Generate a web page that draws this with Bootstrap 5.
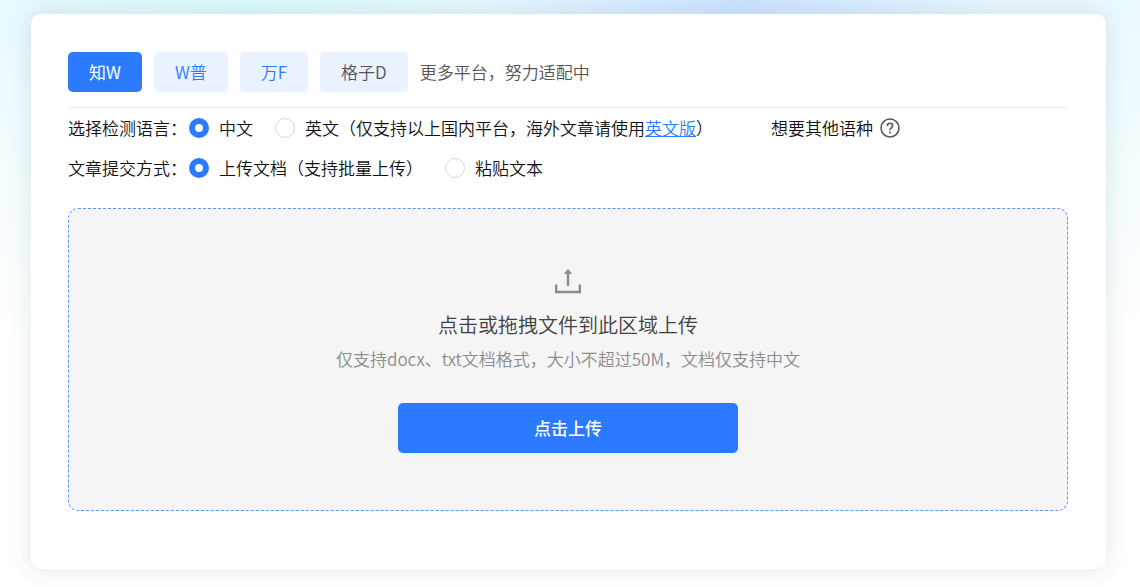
<!DOCTYPE html>
<html lang="zh-CN">
<head>
<meta charset="utf-8">
<meta name="viewport" content="width=device-width, initial-scale=1">
<title>文章检测</title>
<link href="https://cdn.jsdelivr.net/npm/bootstrap@5.3.0/dist/css/bootstrap.min.css" rel="stylesheet">
<style>
  :root { --brand: #2c7aff; --brand-soft: #eaf1ff; }
  body {
    font-family: "Noto Sans CJK SC", sans-serif;
    font-size: 17px;
    font-weight: 350;
    line-height: 24px;
    color: #111;
    min-height: 100vh;
    background:
      radial-gradient(ellipse 260px 120px at 65% 0, #cde3ff 0, #cde3ff00 100%),
      radial-gradient(ellipse 300px 150px at 22% 0, #dcfafb 0, #dcfafb00 100%),
      linear-gradient(#eaf8ff 0, #f2fcff 140px, #fff 340px) no-repeat #fff;
  }
  .page { padding: 14px 34px 17px 31px; }
  .panel {
    background: #fff;
    border-radius: 10px;
    box-shadow: 0 0 24px rgba(0, 70, 80, .13);
    padding: 38px 38px 58px 37px;
  }
  .platforms { padding-bottom: 15px; border-bottom: 1px solid #ebebeb; color: #555; gap: 12px; }
  .platform {
    height: 40px;
    padding: 0 21px;
    border: 0;
    border-radius: 5px;
    font-size: 17px;
    font-weight: 350;
    color: var(--brand);
    background: var(--brand-soft);
  }
  .platform.active { color: #fff; background: var(--brand); font-weight: 400; }
  .platform.muted { color: #555; }
  .option-row { height: 40px; }
  .option-title { width: 121px; }
  .choice { gap: 10px; margin-right: 22px; }
  .choice .form-check-input {
    width: 20px;
    height: 20px;
    margin: 0;
    border: 1px solid #d9d9d9;
  }
  .choice .form-check-input:checked {
    border: 6px solid var(--brand);
    background: #fff;
  }
  .choice a { color: var(--brand); }
  .other { margin-left: 36px; gap: 7px; }
  .drop {
    height: 303px;
    margin-top: 20px;
    padding-top: 60px;
    border: 1px dashed #5894f5;
    border-radius: 10px;
    background: #f5f5f5;
  }
  .drop-title { font-size: 20px; line-height: 28px; color: #404040; margin-top: 16px; }
  .drop-hint { color: #8c8c8c; margin-top: 8px; }
  .upload {
    width: 340px;
    height: 50px;
    margin-top: 32px;
    border: 0;
    border-radius: 5px;
    background: var(--brand);
    color: #fff;
    font-size: 17px;
    font-weight: 500;
  }
</style>
</head>
<body>
<main class="page">
  <section class="panel">
    <div class="platforms d-flex flex-wrap align-items-center">
      <button type="button" class="btn platform active">知W</button>
      <button type="button" class="btn platform">W普</button>
      <button type="button" class="btn platform">万F</button>
      <button type="button" class="btn platform muted">格子D</button>
      <span>更多平台，努力适配中</span>
    </div>

    <div class="option-row d-flex align-items-center text-nowrap" role="radiogroup" aria-labelledby="lang-title">
      <span class="option-title" id="lang-title">选择检测语言：</span>
      <div class="choice d-flex align-items-center">
        <input class="form-check-input" type="radio" name="lang" id="lang-zh" checked>
        <label for="lang-zh">中文</label>
      </div>
      <div class="choice d-flex align-items-center">
        <input class="form-check-input" type="radio" name="lang" id="lang-en">
        <label for="lang-en">英文（仅支持以上国内平台，海外文章请使用<a href="#">英文版</a>）</label>
      </div>
      <div class="other d-flex align-items-center">
        <span>想要其他语种</span>
        <svg width="20" height="20" viewBox="0 0 20 20" fill="none" stroke="#555" stroke-width="1.5" aria-hidden="true">
          <circle cx="10" cy="10" r="9"/>
          <path d="M7.3 8C7.3 6.3 8.4 5.3 10 5.3S12.7 6.3 12.7 7.8C12.7 9.6 10 9.8 10 12.2"/>
          <circle cx="10" cy="14.4" r="1" fill="#555" stroke="none"/>
        </svg>
      </div>
    </div>

    <div class="option-row d-flex align-items-center text-nowrap" role="radiogroup" aria-labelledby="mode-title">
      <span class="option-title" id="mode-title">文章提交方式：</span>
      <div class="choice d-flex align-items-center">
        <input class="form-check-input" type="radio" name="mode" id="mode-file" checked>
        <label for="mode-file">上传文档（支持批量上传）</label>
      </div>
      <div class="choice d-flex align-items-center">
        <input class="form-check-input" type="radio" name="mode" id="mode-text">
        <label for="mode-text">粘贴文本</label>
      </div>
    </div>

    <div class="drop d-flex flex-column align-items-center text-center">
      <svg width="26" height="26" viewBox="0 0 26 26" fill="none" stroke="#8c8c8c" stroke-width="2.4" aria-hidden="true">
        <path d="M1.2 15.5V23H24.8V15.5M13 17V4"/>
        <path d="M13 0L17.2 5H8.8Z" fill="#8c8c8c" stroke="none"/>
      </svg>
      <div class="drop-title">点击或拖拽文件到此区域上传</div>
      <div class="drop-hint">仅支持docx、txt文档格式，大小不超过50M，文档仅支持中文</div>
      <button type="button" class="btn upload">点击上传</button>
    </div>
  </section>
</main>
<script src="https://cdn.jsdelivr.net/npm/bootstrap@5.3.0/dist/js/bootstrap.bundle.min.js"></script>
</body>
</html>
